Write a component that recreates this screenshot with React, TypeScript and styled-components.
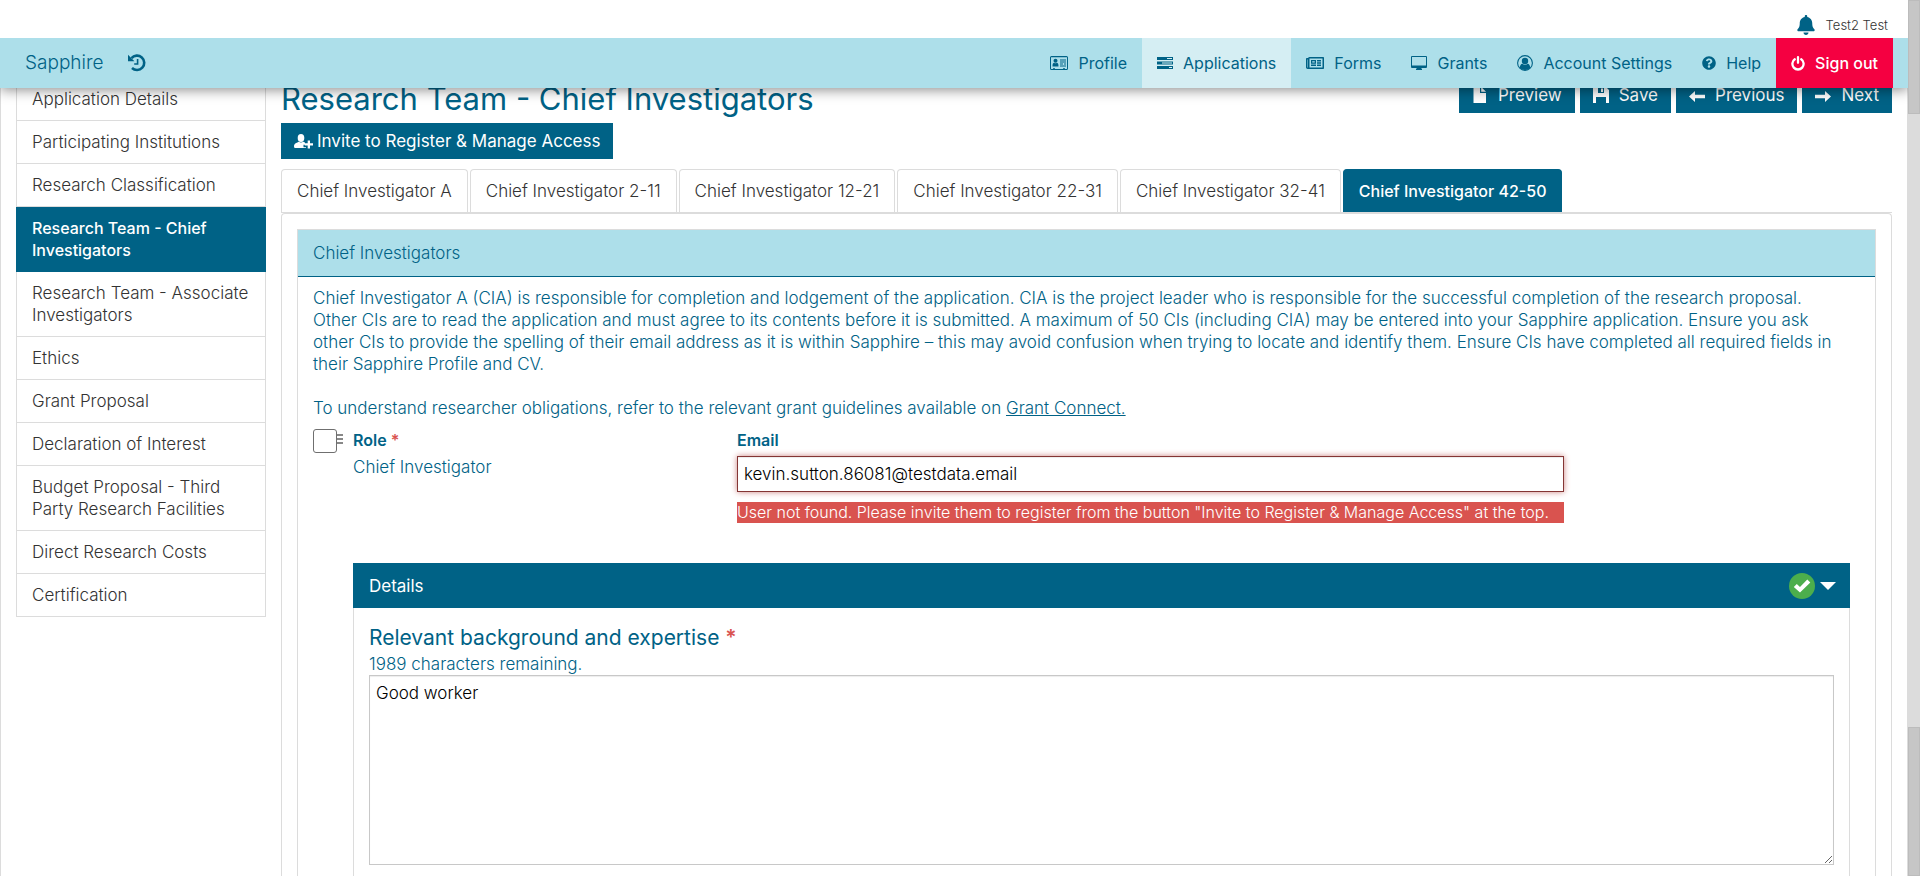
import React from "react";
import styled, { createGlobalStyle, css } from "styled-components";
import { FaBell, FaRegNewspaper, FaQuestionCircle } from "react-icons/fa";

const color = {
  deep: "#006286",
  sky: "#addfea",
  skyLight: "#d5eef3",
  line: "#dcdcdc",
  text: "#333333",
  red: "#f50041",
  danger: "#d9534f",
};

const GlobalStyle = createGlobalStyle`
  *, *::before, *::after { box-sizing: border-box; }
  body { margin: 0; background: #fff; color: ${color.deep}; font: 300 17px/22px Inter, "Liberation Sans", sans-serif; }
  button, input, textarea { font: inherit; }
  a { color: inherit; text-decoration: none; }
  h1, h2, h3, p, ul { margin: 0; padding: 0; font-size: inherit; font-weight: inherit; }
  ul { list-style: none; }
`;

const Shell = styled.div`
  display: grid;
  grid-template-columns: minmax(0, 1fr) 12px;
  height: 100vh;
  overflow: hidden;
`;

const Page = styled.div`
  position: relative;
  height: 100vh;
  overflow: hidden;
`;

const Header = styled.header`
  position: absolute;
  z-index: 2;
  top: 0;
  left: 0;
  right: 0;
`;

const UserBar = styled.div`
  position: relative;
  z-index: 1;
  display: flex;
  justify-content: flex-end;
  align-items: flex-end;
  gap: 10px;
  height: 38px;
  padding: 0 20px 3px 0;
  background: #fff;
  color: ${color.text};
  font-size: 13px;
  line-height: 20px;

  svg { color: ${color.deep}; }
`;

const NavBar = styled.nav`
  display: flex;
  justify-content: space-between;
  height: 50px;
  padding: 0 15px 0 25px;
  background: ${color.sky};
  box-shadow: 0 2px 12px rgba(0, 0, 0, 0.45);
`;

const Brand = styled.div`
  display: flex;
  align-items: center;
  gap: 25px;
  font-size: 19px;

  a { display: flex; }
`;

const NavList = styled.ul`
  display: flex;
`;

const NavLink = styled.a<{ $kind?: "current" | "exit" }>`
  display: flex;
  align-items: center;
  gap: 10px;
  height: 50px;
  padding: 0 15px;
  font-size: 16px;
  font-weight: 400;
  ${(p) => p.$kind === "current" && css`background: ${color.skyLight};`}
  ${(p) => p.$kind === "exit" && css`background: ${color.red}; color: #fff; font-weight: 500;`}
`;

const Columns = styled.div`
  display: grid;
  grid-template-columns: 250px minmax(0, 1fr);
  gap: 15px;
  min-height: 100%;
  padding: 77px 15px 0;
  border: solid ${color.line};
  border-width: 0 1px;
`;

const SideList = styled.ul`
  border-top: 1px solid ${color.line};
`;

const SideItem = styled.a<{ $active?: boolean }>`
  display: block;
  padding: 10px 15px;
  border: solid ${color.line};
  border-width: 0 1px 1px;
  color: ${color.text};
  ${(p) => p.$active && css`
    background: ${color.deep};
    border-color: ${color.deep};
    color: #fff;
    font-size: 16px;
    font-weight: 500;
  `}
`;

const TitleRow = styled.div`
  display: flex;
  justify-content: space-between;
  align-items: flex-start;
  height: 46px;
`;

const Title = styled.h1`
  font-size: 31px;
  font-weight: 400;
  line-height: 44px;
`;

const Actions = styled.div`
  display: flex;
  gap: 5px;
`;

const Button = styled.button<{ $wide?: boolean }>`
  display: flex;
  align-items: center;
  gap: ${(p) => (p.$wide ? 4 : 10)}px;
  height: 36px;
  padding: 0 13px;
  border: 0;
  background: ${color.deep};
  color: #fff;
  font-size: 17px;
  font-weight: 400;
  line-height: 22px;
`;

const TabStrip = styled.div`
  display: flex;
  gap: 2px;
  margin-top: 10px;
  border-bottom: 1px solid ${color.line};
`;

const Tab = styled.button<{ $active?: boolean }>`
  height: 43px;
  padding: 0 15px;
  border: 1px solid ${color.line};
  border-bottom: 0;
  border-radius: 4px 4px 0 0;
  background: #fff;
  color: ${color.text};
  white-space: nowrap;
  ${(p) => p.$active && css`
    background: ${color.deep};
    border-color: ${color.deep};
    color: #fff;
    font-size: 16px;
    font-weight: 500;
  `}
`;

const TabPanel = styled.div`
  padding: 15px 15px 0;
  border: 1px solid ${color.line};
  border-bottom: 0;
  border-radius: 4px 4px 0 0;
`;

const Section = styled.section`
  border: 1px solid ${color.line};
`;

const SectionHead = styled.h2`
  padding: 12px 15px;
  background: ${color.sky};
  border-bottom: 1px solid ${color.deep};
`;

const SectionBody = styled.div`
  padding: 10px 15px;
`;

const Intro = styled.p`
  padding-right: 16px;

  & + & { margin-top: 22px; }
  a { text-decoration: underline; }
`;

const Entry = styled.div`
  display: grid;
  grid-template-columns: 40px minmax(0, 1fr);
  margin: 10px 10px 0 0;
`;

const Handle = styled.div`
  display: flex;
  align-items: flex-start;

  input {
    appearance: none;
    width: 24px;
    height: 24px;
    margin: 0;
    border: 1px solid #6f6f6f;
    border-radius: 3px;
    background: #fff;
  }
  svg { margin-top: 5px; }
`;

const Fields = styled.div`
  display: grid;
  grid-template-columns: 384px minmax(0, 827px);
  min-height: 134px;
`;

const FieldLabel = styled.label`
  display: block;
  font-size: 16px;
  font-weight: 600;
`;

const Star = styled.span`
  color: ${color.danger};
  font-weight: 600;
`;

const RoleValue = styled.div`
  padding-top: 5px;
`;

const EmailInput = styled.input`
  display: block;
  width: 100%;
  height: 36px;
  margin-top: 5px;
  padding: 0 6px;
  border: 1px solid #843534;
  color: #000;
  box-shadow: inset 0 1px 1px rgba(0, 0, 0, 0.075), 0 0 6px #ce8483;
  outline: 0;
`;

const ErrorText = styled.p`
  margin-top: 10px;
  background: ${color.danger};
  color: #fff;
  font-size: 16px;
  line-height: 21px;
  white-space: nowrap;
`;

const Details = styled.section`
  border: 1px solid ${color.line};
  border-width: 0 1px;
`;

const DetailsHead = styled.div`
  display: flex;
  justify-content: space-between;
  align-items: center;
  height: 45px;
  margin: 0 -1px;
  padding: 0 14px 0 16px;
  background: ${color.deep};
  color: #fff;
  font-weight: 400;
`;

const Toggle = styled.button`
  display: flex;
  align-items: center;
  gap: 5px;
  padding: 0;
  border: 0;
  background: none;
  color: #fff;
`;

const Done = styled.span`
  display: grid;
  place-items: center;
  width: 26px;
  height: 26px;
  border-radius: 50%;
  background: #4cae4c;
`;

const DetailsBody = styled.div`
  padding: 16px 15px 40px;
`;

const Question = styled.label`
  display: block;
  font-size: 21px;
  font-weight: 400;
  line-height: 28px;
`;

const Remaining = styled.p`
  padding-top: 1px;
`;

const Answer = styled.textarea`
  display: block;
  width: 100%;
  height: 190px;
  padding: 6px;
  border: 1px solid #c8c8c8;
  color: #000;
  box-shadow: inset 0 1px 1px rgba(0, 0, 0, 0.075);
  resize: both;
`;

const ScrollTrack = styled.div`
  display: flex;
  flex-direction: column;
  justify-content: space-between;
  background: #dcdcdc;
`;

const Thumb = styled.div<{ $share: number }>`
  flex: 0 0 ${(p) => p.$share}%;
  border: 1px solid #bcbcbc;
  background: #c6c6c6;
`;

const HistoryIcon = () => (
  <svg width="18" height="18" viewBox="0 0 18 18" fill="none" stroke="currentColor" aria-hidden="true">
    <path d="M3.500 4.200A7.200 7.200 0 1 1 4 14" strokeWidth="2.600" />
    <path d="M0 .8v6.400h6.400z" fill="currentColor" stroke="none" />
    <path d="M9.600 5v5H6.200" strokeWidth="1.600" />
  </svg>
);

const PowerIcon = () => (
  <svg width="14" height="15" viewBox="0 0 14 15" fill="none" stroke="currentColor" strokeLinecap="round" aria-hidden="true">
    <path d="M3.800 3.300a5.600 5.600 0 1 0 6.400 0M7 1.200v5.600" strokeWidth="2.300" />
  </svg>
);

const CheckIcon = () => (
  <svg width="18" height="14" viewBox="0 0 18 14" fill="currentColor" aria-hidden="true">
    <path d="M.8 8 3.800 5l3.200 3L14.300.5l3 2.900L7 13.600z" />
  </svg>
);

const IdCardIcon = () => (
  <svg width="18" height="14" viewBox="0 0 18 14" fill="currentColor" aria-hidden="true">
    <path fillRule="evenodd" d="M1.500 0h15A1.500 1.500 0 0 1 18 1.500v11a1.500 1.500 0 0 1-1.500 1.500h-15A1.500 1.500 0 0 1 0 12.500v-11A1.500 1.500 0 0 1 1.500 0zM1 1.200v11.300q0 .5.5.5H3v-.8h2v.8h8v-.8h2v.8h1.500q.5 0 .5-.5V1.200z" />
    <circle cx="5.500" cy="4.800" r="2" />
    <path d="M2.500 10c0-2.300.8-3.300 1.700-3.300q1.300 1 2.600 0C7.700 6.700 8.500 7.700 8.500 10q0 .6-.6.6H3.100q-.6 0-.6-.6zM10 3.500h6v1h-6zM10 5.500h6v1h-6zM10 7.500h3v1h-3zM14 7.500h2v1h-2zM10 9.500h6v1h-6z" />
  </svg>
);

const TasksIcon = () => (
  <svg width="16" height="14" viewBox="0 0 16 14" fill="currentColor" aria-hidden="true">
    <path fillRule="evenodd" d="M0 1h16v3H0zM10 2v1h5V2zM0 5.500h16v3H0zM5 6.500v1h10v-1zM0 10h16v3H0zM12 11v1h3v-1z" />
  </svg>
);

const DisplayIcon = () => (
  <svg width="16" height="14" viewBox="0 0 16 14" fill="currentColor" aria-hidden="true">
    <path fillRule="evenodd" d="M1 0h14q1 0 1 1v10q0 1-1 1h-4.500v1H11v1H5v-1h.500v-1H1q-1 0-1-1V1q0-1 1-1zM1 1v8.500h14V1z" />
  </svg>
);

const AccountIcon = () => (
  <svg width="16" height="16" viewBox="0 0 16 16" fill="currentColor" aria-hidden="true">
    <circle cx="8" cy="8" r="7.400" fill="none" stroke="currentColor" strokeWidth="1.100" />
    <circle cx="8" cy="6" r="3.200" />
    <path d="M2.700 12.700c.2-2.200 1.200-3.900 2.600-4 1.700 1.300 3.700 1.300 5.400 0 1.400.1 2.400 1.800 2.600 4A7 7 0 0 1 8 15a7 7 0 0 1-5.300-2.300z" />
  </svg>
);

const UserPlusIcon = () => (
  <svg width="19" height="15" viewBox="0 0 19 15" fill="currentColor" aria-hidden="true">
    <ellipse cx="7" cy="4" rx="3.300" ry="4" />
    <path d="M0 12.500C0 9.500 2 9 4.800 7.700q2.200 1.600 4.400 0l1.800.8v2.200H9.500v2.600H12V14H1.200Q0 14 0 12.500z" />
    <path d="M13.700 6.500h2.300v2.800h3v2.300h-3v2.800h-2.300v-2.800h-3V9.300h3z" />
  </svg>
);

const FileIcon = () => (
  <svg width="16" height="16" viewBox="0 0 16 16" fill="currentColor" aria-hidden="true">
    <path d="M1.500 0H8v6h6v10H1.500zM9.200 0 14 4.800H9.200z" />
  </svg>
);

const SaveIcon = () => (
  <svg width="16" height="16" viewBox="0 0 16 16" fill="currentColor" aria-hidden="true">
    <path fillRule="evenodd" d="M0 0h13l3 3v13h-3v-6H3v6H0zM5 1v5h6V1zM8 1.500h2V5H8z" />
  </svg>
);

const ArrowIcon = ({ flip }: { flip?: boolean }) => (
  <svg width="16" height="16" viewBox="0 0 16 16" fill="currentColor" aria-hidden="true">
    <path d={flip ? "M16 9.500 10 4v3.800H0v3.400h10V15z" : "M0 9.500 6 4v3.800h10v3.400H6V15z"} />
  </svg>
);

const navItems = [
  { label: "Profile", icon: <IdCardIcon /> },
  { label: "Applications", icon: <TasksIcon />, kind: "current" as const },
  { label: "Forms", icon: <FaRegNewspaper size={18} /> },
  { label: "Grants", icon: <DisplayIcon /> },
  { label: "Account Settings", icon: <AccountIcon /> },
  { label: "Help", icon: <FaQuestionCircle size={14} /> },
  { label: "Sign out", icon: <PowerIcon />, kind: "exit" as const },
];

const sideItems = [
  "Application Details",
  "Participating Institutions",
  "Research Classification",
  "Research Team - Chief Investigators",
  "Research Team - Associate Investigators",
  "Ethics",
  "Grant Proposal",
  "Declaration of Interest",
  "Budget Proposal - Third Party Research Facilities",
  "Direct Research Costs",
  "Certification",
];

const tabs = ["A", "2-11", "12-21", "22-31", "32-41", "42-50"];

export default function App() {
  return (
    <Shell>
      <GlobalStyle />
      <Page>
        <Header>
          <UserBar>
            <FaBell size={20} />
            <span>Test2 Test</span>
          </UserBar>
          <NavBar>
            <Brand>
              <a href="#home">Sapphire</a>
              <a href="#history" aria-label="History"><HistoryIcon /></a>
            </Brand>
            <NavList>
              {navItems.map((n) => (
                <li key={n.label}>
                  <NavLink href="#nav" $kind={n.kind}>{n.icon}<span>{n.label}</span></NavLink>
                </li>
              ))}
            </NavList>
          </NavBar>
        </Header>
        <Columns>
          <div>
            <SideList>
              {sideItems.map((label, i) => (
                <li key={label}><SideItem href="#section" $active={i === 3}>{label}</SideItem></li>
              ))}
            </SideList>
          </div>
          <main>
            <TitleRow>
              <Title>Research Team - Chief Investigators</Title>
              <Actions>
                <Button type="button"><FileIcon />Preview</Button>
                <Button type="button"><SaveIcon />Save</Button>
                <Button type="button"><ArrowIcon />Previous</Button>
                <Button type="button"><ArrowIcon flip />Next</Button>
              </Actions>
            </TitleRow>
            <Button type="button" $wide><UserPlusIcon />Invite to Register &amp; Manage Access</Button>
            <TabStrip role="tablist">
              {tabs.map((t, i) => (
                <Tab key={t} type="button" role="tab" aria-selected={i === 5} $active={i === 5}>Chief Investigator {t}</Tab>
              ))}
            </TabStrip>
            <TabPanel>
              <Section>
                <SectionHead>Chief Investigators</SectionHead>
                <SectionBody>
                  <Intro>
                    Chief Investigator A (CIA) is responsible for completion and lodgement of the application. CIA is the project leader who is responsible for the successful completion of the research proposal. Other CIs are to read the application and must agree to its contents before it is submitted. A maximum of 50 CIs (including CIA) may be entered into your Sapphire application. Ensure you ask other CIs to provide the spelling of their email address as it is within Sapphire – this may avoid confusion when trying to locate and identify them. Ensure CIs have completed all required fields in their Sapphire Profile and CV.
                  </Intro>
                  <Intro>
                    To understand researcher obligations, refer to the relevant grant guidelines available on <a href="#grant-connect">Grant Connect.</a>
                  </Intro>
                  <Entry>
                    <Handle>
                      <input type="checkbox" aria-label="Select investigator" />
                      <svg width="6" height="10" viewBox="0 0 6 10" fill="#888" aria-hidden="true"><path d="M0 0h6v2H0zM0 4h6v2H0zM0 8h6v2H0z" /></svg>
                    </Handle>
                    <div>
                      <Fields>
                        <div>
                          <FieldLabel as="div">Role <Star>*</Star></FieldLabel>
                          <RoleValue>Chief Investigator</RoleValue>
                        </div>
                        <div>
                          <FieldLabel htmlFor="email">Email</FieldLabel>
                          <EmailInput id="email" type="text" defaultValue="kevin.sutton.86081@testdata.email" />
                          <ErrorText>User not found. Please invite them to register from the button "Invite to Register &amp; Manage Access" at the top.</ErrorText>
                        </div>
                      </Fields>
                      <Details>
                        <DetailsHead>
                          <h3>Details</h3>
                          <Toggle type="button" aria-label="Collapse details">
                            <Done><CheckIcon /></Done>
                            <svg width="16" height="8" viewBox="0 0 16 8" fill="currentColor" aria-hidden="true"><path d="M0 0h16L8 8z" /></svg>
                          </Toggle>
                        </DetailsHead>
                        <DetailsBody>
                          <Question htmlFor="background">Relevant background and expertise <Star>*</Star></Question>
                          <Remaining>1989 characters remaining.</Remaining>
                          <Answer id="background" defaultValue="Good worker" />
                        </DetailsBody>
                      </Details>
                    </div>
                  </Entry>
                </SectionBody>
              </Section>
            </TabPanel>
          </main>
        </Columns>
      </Page>
      <ScrollTrack aria-hidden="true">
        <Thumb $share={13} />
        <Thumb $share={17} />
      </ScrollTrack>
    </Shell>
  );
}
